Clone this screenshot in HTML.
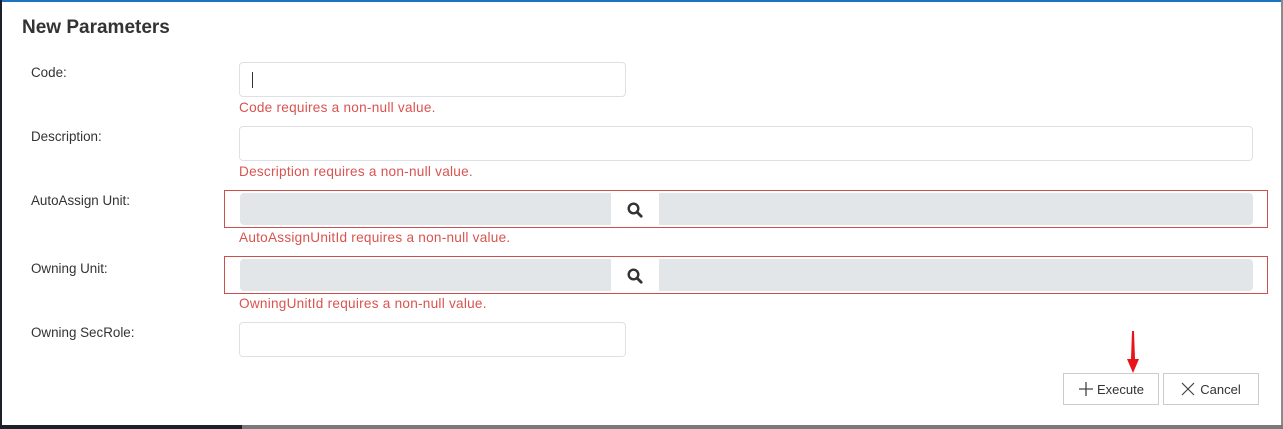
<!DOCTYPE html>
<html><head><style>
body{margin:0;width:1283px;height:429px;position:relative;background:#fff;font-family:"Liberation Sans",sans-serif;overflow:hidden}
.a{position:absolute}
.lbl{position:absolute;left:31px;font-size:13.4px;color:#333}
.err{position:absolute;left:239px;font-size:13.6px;letter-spacing:0.25px;color:#d9534f}
.inp{position:absolute;border:1px solid #dde1e5;border-radius:4px;background:#fff;box-sizing:border-box}
.rb{position:absolute;left:224px;width:1044px;height:38px;border:1px solid #c9504d;box-sizing:border-box}
.g{position:absolute;background:#e3e6e9;top:2px;height:32px}
.btn{position:absolute;top:373px;height:32px;border:1px solid #ccc;box-sizing:border-box;font-size:13px;color:#333;display:flex;align-items:center;justify-content:center;background:#fff}
</style></head><body>
<div class="a" style="left:0;top:0;width:1283px;height:2px;background:#1a74c0"></div>
<div class="a" style="left:0;top:0;width:2px;height:429px;background:#1b2029"></div>
<div class="a" style="left:1281px;top:0;width:2px;height:429px;background:#8a8a8a"></div>
<div class="a" style="left:0;top:425px;width:242px;height:4px;background:#1b2029"></div>
<div class="a" style="left:242px;top:425px;width:1041px;height:4px;background:#7a7a7a"></div>
<div class="a" style="left:22px;top:17px;font-size:19px;font-weight:bold;color:#333">New Parameters</div>

<div class="lbl" style="top:65px">Code:</div>
<div class="inp" style="left:239px;top:62px;width:387px;height:35px"><div class="a" style="left:12px;top:9px;width:1px;height:16px;background:#333"></div></div>
<div class="err" style="top:100px">Code requires a non-null value.</div>

<div class="lbl" style="top:129px">Description:</div>
<div class="inp" style="left:239px;top:126px;width:1014px;height:35px"></div>
<div class="err" style="top:164px">Description requires a non-null value.</div>

<div class="lbl" style="top:193px">AutoAssign Unit:</div>
<div class="rb" style="top:190px"><div class="g" style="left:15px;width:371px;border-radius:4px 0 0 4px"></div><div class="g" style="left:434px;width:594px;border-radius:0 4px 4px 0"></div>
<svg class="a" style="left:402px;top:11px" width="16" height="16" viewBox="0 0 16 16"><circle cx="6.5" cy="6.5" r="4.8" fill="none" stroke="#333" stroke-width="2.4"/><path d="M10.2 10.2l4 4" stroke="#333" stroke-width="2.8" stroke-linecap="round"/></svg></div>
<div class="err" style="top:230px">AutoAssignUnitId requires a non-null value.</div>

<div class="lbl" style="top:261px">Owning Unit:</div>
<div class="rb" style="top:256px"><div class="g" style="left:15px;width:371px;border-radius:4px 0 0 4px"></div><div class="g" style="left:434px;width:594px;border-radius:0 4px 4px 0"></div>
<svg class="a" style="left:402px;top:11px" width="16" height="16" viewBox="0 0 16 16"><circle cx="6.5" cy="6.5" r="4.8" fill="none" stroke="#333" stroke-width="2.4"/><path d="M10.2 10.2l4 4" stroke="#333" stroke-width="2.8" stroke-linecap="round"/></svg></div>
<div class="err" style="top:296px">OwningUnitId requires a non-null value.</div>

<div class="lbl" style="top:325px">Owning SecRole:</div>
<div class="inp" style="left:239px;top:322px;width:387px;height:35px"></div>

<div class="btn" style="left:1063px;width:96px"><svg width="16" height="16" viewBox="0 0 16 16" style="margin-right:3px"><path d="M8 1v14M1 8h14" stroke="#444" stroke-width="1.3"/></svg>Execute</div>
<div class="btn" style="left:1163px;width:96px"><svg width="14" height="14" viewBox="0 0 14 14" style="margin-right:5px"><path d="M1 1l12 12M13 1L1 13" stroke="#444" stroke-width="1.2"/></svg>Cancel</div>
<svg class="a" style="left:1125px;top:331px" width="16" height="43" viewBox="0 0 16 43"><path d="M7 0h2l1 28h4l-6 14-6-14h4z" fill="#e8141a"/></svg>
</body></html>
